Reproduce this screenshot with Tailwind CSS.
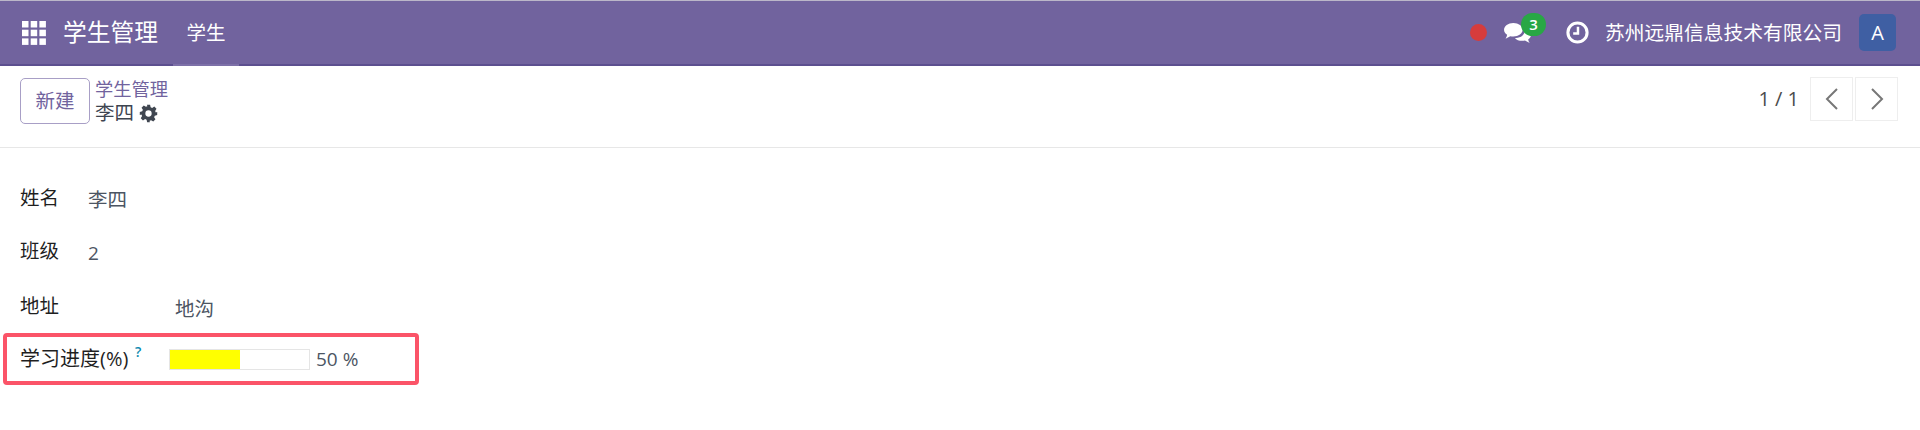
<!DOCTYPE html>
<html lang="zh"><head><meta charset="utf-8">
<script src="https://cdn.jsdelivr.net/npm/@tailwindcss/browser@4"></script>
</head>
<body class="bg-white font-['Open_Sans','Noto_Sans_CJK_SC',sans-serif] text-[#4c4c4c] h-[430px] overflow-hidden">
<header class="h-[66px] bg-[#71639e] border-t border-t-[#bbb7c9] border-b-2 border-b-[#5c4f8f] flex items-center text-white">
  <svg class="ml-[22px] w-6 h-6" viewBox="0 0 24 24" fill="#fff"><rect x="0" y="0" width="6.5" height="6.5"/><rect x="8.7" y="0" width="6.5" height="6.5"/><rect x="17.4" y="0" width="6.5" height="6.5"/><rect x="0" y="8.7" width="6.5" height="6.5"/><rect x="8.7" y="8.7" width="6.5" height="6.5"/><rect x="17.4" y="8.7" width="6.5" height="6.5"/><rect x="0" y="17.4" width="6.5" height="6.5"/><rect x="8.7" y="17.4" width="6.5" height="6.5"/><rect x="17.4" y="17.4" width="6.5" height="6.5"/></svg>
  <span class="ml-[17px] text-[23.75px] leading-none">学生管理</span>
  <span class="ml-[15px] h-[65px] mb-[-2px] w-[66px] flex items-center justify-center text-[19.5px] border-b-2 border-b-[#7d70a8]">学生</span>
  <div class="ml-auto flex items-center h-full">
    <span class="w-[17px] h-[17px] rounded-full bg-[#d63c3c]"></span>
    <div class="relative ml-[16px] w-[29px] h-[25px] mt-[3px]">
      <svg class="w-[29px] h-[25px]" viewBox="0 0 28 24" fill="#fff"><path d="M10 1c5 0 9 3 9 6.5S15 14 10 14c-1 0-2 0-3-.4L2.500 16c.8-1 1.300-2.200 1.500-3.700C2 11 1 9.400 1 7.500 1 4 5 1 10 1z"/><path d="M21 6.500c3.500 1 6 3.300 6 6 0 1.800-1 3.300-2.700 4.300.2 1.300.7 2.400 1.500 3.400l-4.600-2.400c-.8.200-1.700.3-2.700.3-3 0-5.600-1-7-2.800 6 .5 10.500-3.500 9.500-8.800z"/></svg>
      <span class="absolute left-[18px] top-[-9px] w-[25px] h-[23px] rounded-full bg-[#28a745] text-[15px] font-semibold flex items-center justify-center leading-none">3</span>
    </div>
    <svg class="ml-[34px] w-[23px] h-[23px]" viewBox="0 0 24 24" fill="none" stroke="#fff"><circle cx="12" cy="12" r="10" stroke-width="3.200"/><path d="M12.500 6v7H7.500" stroke-width="2.600"/></svg>
    <span class="ml-[16px] text-[19.75px] leading-none">苏州远鼎信息技术有限公司</span>
    <span class="ml-[17px] mr-[24px] w-[37px] h-[37px] rounded-[5px] bg-[#3f5fa3] flex items-center justify-center text-[20px]">A</span>
  </div>
</header>
<section class="h-[82px] border-b border-b-[#e7e7e7] flex items-start pl-[20px] pr-[22px]">
  <button class="mt-[12px] w-[70px] h-[46px] rounded-[5px] border border-[#a89fc6] text-[#71639e] text-[19.5px] flex items-center justify-center">新建</button>
  <div class="ml-[5px] mt-[11px] flex flex-col">
    <span class="text-[#71639e] text-[18.25px] leading-[24px]">学生管理</span>
    <span class="flex items-center text-[#3d4450] text-[19.5px] leading-[24px]">李四
      <svg class="ml-[5px] w-[19px] h-[19px]" viewBox="0 0 24 24" fill="#3f4650"><path fill-rule="evenodd" d="M10 1h4l.7 3.100 1.900.8 2.700-1.700 2.800 2.800-1.700 2.700.8 1.900L23 10v4l-3.100.7-.8 1.900 1.700 2.700-2.800 2.800-2.700-1.700-1.900.8L13.700 23h-3.400l-.7-3.100-1.900-.8-2.700 1.700-2.800-2.800 1.700-2.700-.8-1.900L1 14v-4l3.100-.7.8-1.900-1.700-2.700L6 1.900l2.700 1.700 1.900-.8zM12 8a4 4 0 1 0 0 8 4 4 0 0 0 0-8z"/></svg></span>
  </div>
  <div class="ml-auto flex items-center mt-[11px] h-[44px]">
    <span class="text-[#4c4c4c] text-[20px]">1 / 1</span>
    <button class="ml-[11px] w-[43px] h-[44px] border border-[#eeeeee] flex items-center justify-center"><svg class="w-[16px] h-[24px]" viewBox="0 0 16 24" fill="none" stroke="#777" stroke-width="2"><path d="M13 2L3 12l10 10"/></svg></button>
    <button class="ml-[2px] w-[43px] h-[44px] border border-[#eeeeee] flex items-center justify-center"><svg class="w-[16px] h-[24px]" viewBox="0 0 16 24" fill="none" stroke="#777" stroke-width="2"><path d="M3 2l10 10L3 22"/></svg></button>
  </div>
</section>
<main class="relative pl-[20px] text-[19.5px]">
  <div class="flex h-[54px] pt-[37px] leading-[26px]"><span class="text-[#1f1f1f] w-[68px]">姓名</span><span class="text-[#4c5563] mt-[2px]">李四</span></div>
  <div class="flex h-[54px] pt-[36px] leading-[26px]"><span class="text-[#1f1f1f] w-[68px]">班级</span><span class="text-[#4c5563] mt-[2px] text-[19px]">2</span></div>
  <div class="flex h-[77px] pt-[37px] leading-[26px]"><span class="text-[#1f1f1f] w-[155px]">地址</span><span class="text-[#4c5563] mt-[3px]">地沟</span></div>
  <div class="ml-[-17px] w-[416px] h-[52px] rounded-[4px] border-[4px] border-[#fb5468] flex items-center pl-[13px]">
    <span class="text-[#1f1f1f] text-[20px] leading-none w-[149px] relative">学习进度(%)<sup class="absolute left-[115px] top-[3px] text-[#0d8ab0] text-[14px] font-semibold">?</sup></span>
    <div class="w-[141px] h-[21px] border border-[#e5e5e5]"><div class="h-full w-1/2 bg-[#ffff00]"></div></div>
    <span class="ml-[6px] text-[#4c5563] text-[19px] leading-none">50 %</span>
  </div>
</main>
</body></html>
